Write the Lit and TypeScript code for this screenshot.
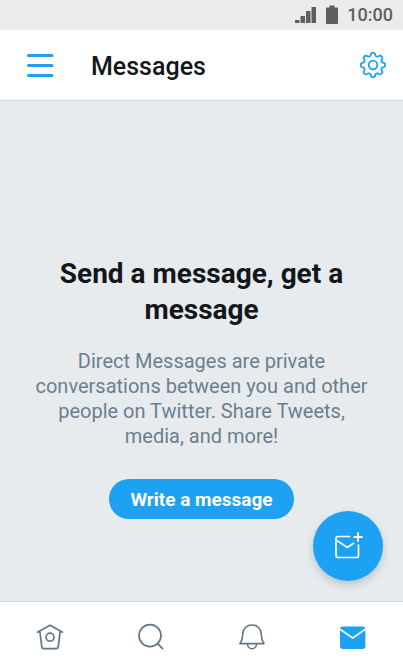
import { LitElement, html, css, svg } from "lit";
import { customElement, state } from "lit/decorators.js";

// Outline of an eight-toothed cog with soft shoulders, centred on 0,0.
const cogOutline = (): string => {
  const steps = 128;
  const points: string[] = [];
  for (let i = 0; i < steps; i++) {
    const a = (i / steps) * Math.PI * 2;
    const r = 10.7 + 1.5 * Math.tanh(1.8 * Math.cos(8 * a) + 0.1);
    points.push(`${(r * Math.sin(a)).toFixed(2)} ${(-r * Math.cos(a)).toFixed(2)}`);
  }
  return `M${points.join("L")}Z`;
};

const icons = {
  menu: svg`<svg width="28" height="26" viewBox="0 0 28 26" fill="none" stroke="currentColor" stroke-width="3" stroke-linecap="round" aria-hidden="true">
    <path d="M2.500 3.500H26M2.500 13.500H26M2.500 23.500H26"/></svg>`,
  cog: svg`<svg width="28" height="28" viewBox="-14 -14 28 28" fill="none" stroke="currentColor" stroke-width="1.8" stroke-linejoin="round" aria-hidden="true">
    <path d=${cogOutline()}/><circle r="4.3"/></svg>`,
  home: svg`<svg width="28" height="28" viewBox="0 0 28 28" fill="none" stroke="currentColor" stroke-width="1.7" stroke-linecap="round" stroke-linejoin="round" aria-hidden="true">
    <path d="M1.4 9.2L14 2.2L26.6 9.2M3.8 8.2L5.8 23.8Q6 25.6 7.8 25.6H20.2Q22 25.6 22.2 23.8L24.2 8.2"/><circle cx="14" cy="14.2" r="4"/></svg>`,
  search: svg`<svg width="28" height="28" viewBox="0 0 28 28" fill="none" stroke="currentColor" stroke-width="1.7" stroke-linecap="round" aria-hidden="true">
    <circle cx="13" cy="12.600" r="11"/><path d="M20.400 20.400L25.600 25.600"/></svg>`,
  bell: svg`<svg width="28" height="28" viewBox="0 0 28 28" fill="none" stroke="currentColor" stroke-width="1.6" stroke-linecap="round" stroke-linejoin="round" aria-hidden="true">
    <path d="M2 20.600H26C24 18 23.600 16.500 23.200 10.600C22.900 5.200 19 2 14 2S5.100 5.200 4.800 10.600C4.400 16.500 4 18 2 20.600ZM9.400 20.600A4.600 5.200 0 0 0 18.600 20.600"/></svg>`,
  mail: svg`<svg width="28" height="28" viewBox="0 0 28 28" fill="currentColor" aria-hidden="true">
    <path d="M1 5.200Q1.400 3.400 3.200 3.400H24.200Q26 3.400 26.400 5.200L13.700 14Z"/>
    <path d="M1 7.300L13.700 16.100L26.400 7.300V23.600Q26.400 26 24 26H3.400Q1 26 1 23.600Z"/></svg>`,
  compose: svg`<svg width="30" height="30" viewBox="0 0 30 30" fill="none" stroke="currentColor" stroke-width="1.700" stroke-linecap="round" stroke-linejoin="round" aria-hidden="true">
    <path d="M16.500 5.500H5Q3 5.500 3 7.500V24.500Q3 26.500 5 26.500H23.500Q25.500 26.500 25.500 24.500V14M3 8.900L14.300 16.500L20.600 12.300"/>
    <path stroke-width="1.800" d="M21.200 6H29M25.100 2V10"/></svg>`,
  signal: svg`<svg width="22" height="18" viewBox="0 0 22 18" fill="currentColor" aria-hidden="true">
    <path d="M0 14H4.500V17H0ZM5.500 10H10V17H5.500ZM11 5H15.500V17H11ZM16.500 1H21V17H16.500Z"/></svg>`,
  battery: svg`<svg width="12" height="20" viewBox="0 0 12 20" fill="currentColor" aria-hidden="true">
    <path d="M3.500 0.500H8.500V2.500H11Q12 2.500 12 3.500V18Q12 19 11 19H1Q0 19 0 18V3.500Q0 2.500 1 2.500H3.500Z"/></svg>`,
};

const tabs = [
  { id: "home", label: "Home", icon: icons.home },
  { id: "search", label: "Search", icon: icons.search },
  { id: "alerts", label: "Notifications", icon: icons.bell },
  { id: "messages", label: "Messages", icon: icons.mail },
];

@customElement("app-root")
export class AppRoot extends LitElement {
  @state() private current = "messages";

  static styles = css`
    :host {
      display: flex;
      flex-direction: column;
      min-height: 100vh;
      font-family: Roboto, sans-serif;
      background: #e7ebee;
      color: #14171a;
    }
    svg {
      display: block;
    }
    button {
      border: 0;
      padding: 0;
      background: none;
      font: inherit;
      color: #1da1f2;
      cursor: pointer;
    }
    .status {
      display: flex;
      align-items: center;
      justify-content: flex-end;
      gap: 9px;
      height: 30px;
      padding: 0 10px;
      background: #ebebeb;
      color: #5f5f5f;
      font-size: 18px;
      font-weight: 500;
      line-height: 32px;
    }
    .bar {
      display: flex;
      align-items: center;
      height: 70px;
      padding: 0 16px 0 26px;
      background: #fff;
      border-bottom: 1px solid #d0d8dd;
    }
    .title {
      flex: 1;
      margin: 0 0 0 37px;
      padding-top: 4px;
      font-size: 25px;
      font-weight: 500;
      line-height: 32px;
    }
    .empty {
      position: relative;
      flex: 1;
      display: flex;
      flex-direction: column;
      align-items: center;
      justify-content: center;
      padding: 73px 32px 0;
      text-align: center;
    }
    .heading {
      margin: 0;
      font-size: 28px;
      font-weight: 700;
      line-height: 36px;
    }
    .text {
      margin: 21px 0 30px;
      color: #6b7f8e;
      font-size: 20px;
      line-height: 25px;
    }
    .write {
      height: 40px;
      padding: 0 21px;
      border-radius: 20px;
      background: #1da1f2;
      color: #fff;
      font-size: 19px;
      font-weight: 700;
    }
    .compose {
      position: absolute;
      right: 20px;
      bottom: 20px;
      display: grid;
      place-items: center;
      width: 70px;
      height: 70px;
      border-radius: 50%;
      background: #1da1f2;
      color: #fff;
      box-shadow: 0 4px 8px rgba(60, 80, 100, 0.25);
    }
    .tabs {
      display: grid;
      grid-template-columns: repeat(4, 1fr);
      height: 70px;
      background: #fff;
      border-top: 1px solid #d0d8dd;
    }
    .tab {
      display: grid;
      place-items: center;
      color: #657786;
    }
    .tab[aria-current="page"] {
      color: #1da1f2;
    }
  `;

  render() {
    return html`
      <div class="status">${icons.signal}${icons.battery}<span>10:00</span></div>
      <header class="bar">
        <button aria-label="Menu">${icons.menu}</button>
        <h1 class="title">Messages</h1>
        <button aria-label="Settings">${icons.cog}</button>
      </header>
      <main class="empty">
        <h2 class="heading">Send a message, get a message</h2>
        <p class="text">
          Direct Messages are private conversations between you and other people
          on Twitter. Share Tweets, media, and more!
        </p>
        <button class="write">Write a message</button>
        <button class="compose" aria-label="New message">${icons.compose}</button>
      </main>
      <nav class="tabs">
        ${tabs.map(
          (t) => html`<button
            class="tab"
            aria-label=${t.label}
            aria-current=${this.current === t.id ? "page" : "false"}
            @click=${() => (this.current = t.id)}
          >
            ${t.icon}
          </button>`
        )}
      </nav>
    `;
  }
}
